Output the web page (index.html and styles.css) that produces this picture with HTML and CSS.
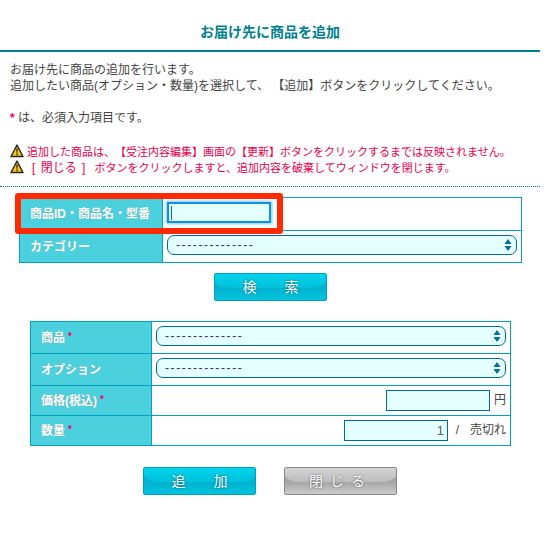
FILE: index.html
```html
<!DOCTYPE html>
<html lang="ja">
<head>
  <meta charset="UTF-8" />
  <title>お届け先に商品を追加</title>
  <link rel="stylesheet" href="styles.css">
</head>
<body>
  <div class="container">
    <h2 class="title">お届け先に商品を追加</h2>

    <div class="intro">
      <p>お届け先に商品の追加を行います。<br>追加したい商品(オプション・数量)を選択して、 【追加】ボタンをクリックしてください。</p>
      <p class="required-note"><span class="mark">*</span> は、必須入力項目です。</p>
      <p class="warn">
        <svg class="warn-icon" viewBox="0 0 14 14"><path d="M7 1 L13 12.5 H1 Z" fill="#f6c81e" stroke="#222" stroke-width="1.4" stroke-linejoin="round"/><path d="M6.2 4.6 H7.8 L7.4 9 H6.6 Z" fill="#222"/><rect x="6.3" y="9.6" width="1.4" height="1.5" fill="#222"/></svg>
        追加した商品は、【受注内容編集】画面の【更新】ボタンをクリックするまでは反映されません。
      </p>
      <p class="warn">
        <svg class="warn-icon" viewBox="0 0 14 14"><path d="M7 1 L13 12.5 H1 Z" fill="#f6c81e" stroke="#222" stroke-width="1.4" stroke-linejoin="round"/><path d="M6.2 4.6 H7.8 L7.4 9 H6.6 Z" fill="#222"/><rect x="6.3" y="9.6" width="1.4" height="1.5" fill="#222"/></svg>
        <span class="warn-close">[ 閉じる ]</span> ボタンをクリックしますと、追加内容を破棄してウィンドウを閉じます。
      </p>
    </div>

    <div class="search">
      <div class="search-table">
        <table class="form-table">
          <tr class="row-a">
            <th class="col-search">商品ID・商品名・型番</th>
            <td>
              <div class="focus-wrap">
                <input class="text-input search-input" type="text">
                <span class="caret"></span>
              </div>
            </td>
          </tr>
          <tr class="row-c">
            <th class="col-search">カテゴリー</th>
            <td>
              <div class="select-wrap">
                <select class="select"><option>--------------</option></select>
                <svg class="arrows" viewBox="0 0 8 12"><path d="M4 0 L7.5 5 H0.5 Z M4 12 L0.5 7 H7.5 Z" fill="#0a6a9c"/></svg>
              </div>
            </td>
          </tr>
        </table>
        <div class="highlight"></div>
      </div>
      <div class="buttons">
        <button class="btn"><span class="btn-label">検　　索</span></button>
      </div>
    </div>

    <table class="form-table result-table">
      <tr class="row-c">
        <th class="col-result">商品<span class="mark">*</span></th>
        <td>
          <div class="select-wrap">
            <select class="select"><option>--------------</option></select>
            <svg class="arrows" viewBox="0 0 8 12"><path d="M4 0 L7.5 5 H0.5 Z M4 12 L0.5 7 H7.5 Z" fill="#0a6a9c"/></svg>
          </div>
        </td>
      </tr>
      <tr class="row-c">
        <th class="col-result">オプション</th>
        <td>
          <div class="select-wrap">
            <select class="select"><option>--------------</option></select>
            <svg class="arrows" viewBox="0 0 8 12"><path d="M4 0 L7.5 5 H0.5 Z M4 12 L0.5 7 H7.5 Z" fill="#0a6a9c"/></svg>
          </div>
        </td>
      </tr>
      <tr class="row-b">
        <th class="col-result">価格(税込)<span class="mark">*</span></th>
        <td class="right"><input class="text-input" type="text"><span class="unit">円</span></td>
      </tr>
      <tr class="row-b">
        <th class="col-result">数量<span class="mark">*</span></th>
        <td class="right"><input class="text-input qty" type="text" value="1"><span class="unit slash">/</span><span class="unit">売切れ</span></td>
      </tr>
    </table>

    <div class="buttons bottom">
      <button class="btn"><span class="btn-label">追　　加</span></button>
      <button class="btn btn-gray"><span class="btn-label spaced">閉じる</span></button>
    </div>
  </div>
</body>
</html>
```

FILE: styles.css
```css
* { box-sizing: border-box; }
body {
  margin: 0;
  background: #fff;
  color: #444;
  font-family: "Liberation Sans", "Noto Sans CJK JP", sans-serif;
  font-size: 12px;
  line-height: 16px;
  text-spacing-trim: space-all;
}
.container { width: 540px; }
.title {
  height: 52px;
  margin: 0;
  padding-top: 22px;
  border-bottom: 2px solid #00808f;
  color: #00808f;
  font-size: 14px;
  line-height: 20px;
  text-align: center;
}
.intro {
  height: 135px;
  padding: 10px 10px 0;
  border-bottom: 1px dotted #00808f;
}
.intro p { margin: 0; }
.intro .required-note { margin-top: 16px; }
.warn { color: #e6004f; font-size: 11px; white-space: nowrap; }
.intro .required-note + .warn { margin-top: 18px; }
.warn-icon { width: 14px; height: 14px; vertical-align: -2px; }
.warn-close { margin: 0 6px 0 5px; font-size: 12px; word-spacing: 2px; }
.mark {
  margin-left: 3px;
  color: #ef0073;
  font-size: 10px;
  font-weight: bold;
  vertical-align: 2px;
  text-shadow: none;
}
.required-note .mark { margin-left: 0; font-size: 12px; vertical-align: 0; }

.search { padding: 10px 18px 0 19px; }
.search-table { position: relative; }
.form-table {
  width: 100%;
  border-collapse: collapse;
  table-layout: fixed;
}
.form-table th, .form-table td {
  border: 1px solid #00a0c0;
  padding: 0 4px;
}
.form-table td { padding-top: 4px; vertical-align: top; }
.form-table .right { padding-top: 4px; padding-bottom: 0; text-align: right; }
.form-table th {
  padding-left: 10px;
  background: #4bd0de;
  color: #fff;
  font-weight: bold;
  text-align: left;
  text-shadow: 0 0 1px #7a9aa0;
}
.row-a { height: 33px; }
.row-b { height: 30px; }
.row-c { height: 32px; }
.col-search { width: 143px; }
.col-result { width: 121px; }
.result-table { width: 481px; margin: 20px 0 0 30px; }

.text-input {
  width: 104px;
  height: 21px;
  padding: 0 3px;
  border: 1px solid #00699a;
  border-radius: 0;
  outline: none;
  background: #e3ffff;
  color: #555;
  font: inherit;
  text-align: right;
  vertical-align: middle;
}
.focus-wrap { position: relative; width: 104px; height: 21px; }
.search-input {
  display: block;
  border: 2px solid #0a90e6;
  box-shadow: 0 0 3px 1px #7cc8f5;
  text-align: left;
}
.caret {
  position: absolute;
  top: 4px;
  left: 4px;
  width: 1px;
  height: 14px;
  background: #00699a;
}
.unit { margin-left: 4px; }
.slash { margin: 0 7px 0 8px; }

.select-wrap { position: relative; height: 20px; }
.select {
  display: block;
  width: 100%;
  height: 20px;
  padding: 0 8px;
  border: 1px solid #00699a;
  border-radius: 7px;
  outline: none;
  appearance: none;
  background: #e3ffff;
  color: #336;
  font: inherit;
  letter-spacing: 1.6px;
}
.arrows {
  position: absolute;
  top: 4px;
  right: 5px;
  width: 8px;
  height: 12px;
}

.highlight {
  position: absolute;
  top: -4px;
  left: -4px;
  width: 268px;
  height: 41px;
  border: 6px solid #ff2a00;
  border-radius: 3px;
  pointer-events: none;
}

.buttons {
  display: flex;
  justify-content: center;
  gap: 28px;
  margin-top: 10px;
}
.bottom { margin: 21px 0 0; }
.btn {
  position: relative;
  width: 113px;
  height: 28px;
  padding: 0;
  overflow: hidden;
  border: 1px solid #00a0b8;
  border-radius: 2px;
  background: linear-gradient(#00aac6 0%, #00b4d0 60%, #00c4de 100%);
  color: #fff;
  font: inherit;
  font-size: 14px;
  text-shadow: 0 0 2px #00505f;
}
/* top gloss of the button */
.btn::before {
  content: "";
  position: absolute;
  top: 0;
  left: 0;
  right: 0;
  height: 14px;
  border-radius: 0 0 16px 16px / 0 0 7px 7px;
  background: linear-gradient(#00d4ee, #00c0da);
}
.btn-label { position: relative; }
.btn-gray {
  border-color: #888;
  background: linear-gradient(#999 0%, #aaa 60%, #ccc 100%);
  text-shadow: 0 0 2px #444;
}
.btn-gray::before { background: linear-gradient(#d4d4d4, #bcbcbc); }
.spaced { letter-spacing: 7px; }
```
